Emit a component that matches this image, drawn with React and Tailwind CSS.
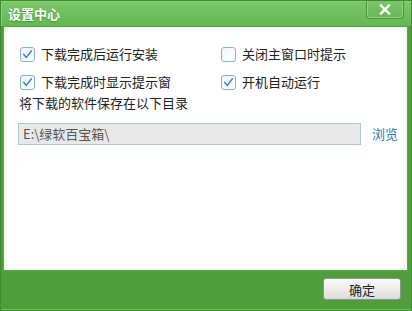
const font = { fontFamily: '"Noto Sans CJK SC", "Liberation Sans", sans-serif' }

function Check({ checked }) {
  return (
    <svg width="15" height="15" viewBox="0 0 15 15" className="shrink-0">
      <defs>
        <linearGradient id="cbg" x1="0" y1="0" x2="1" y2="1">
          <stop offset="0" stopColor="#eef4fa" />
          <stop offset="1" stopColor="#ffffff" />
        </linearGradient>
      </defs>
      <rect x="0.5" y="0.5" width="14" height="14" rx="2.5" fill="url(#cbg)" stroke="#86b2d8" />
      {checked && (
        <path d="M3.8 7.4 L6.4 10.4 L11.4 3.8" fill="none" stroke="#3485cc" strokeWidth="1.5" strokeLinecap="round" strokeLinejoin="round" />
      )}
    </svg>
  )
}

function Option({ checked, label }) {
  return (
    <label className="flex items-center gap-[6px] h-[28px] text-[13px] text-[#222]">
      <Check checked={checked} />
      <span>{label}</span>
    </label>
  )
}

export default function App() {
  return (
    <div style={font} className="w-[412px] h-[311px] flex flex-col border border-[#3e8a30] bg-[#509d3c] overflow-hidden">
      {/* title bar */}
      <div className="h-[25px] flex items-start justify-between bg-gradient-to-b from-[#7cc86a] to-[#64b654] shadow-[inset_1px_1px_0_#8fd27c]">
        <div className="pl-[7px] pt-[5px] text-[13px] font-bold leading-[15px] text-white [text-shadow:0_1px_1px_#4a8a3a]">设置中心</div>
        <button className="mr-[7px] w-[38px] h-[19px] -mt-[1px] flex items-center justify-center rounded-b-[4px] border border-[#4f9040] border-t-0 bg-gradient-to-b from-[#7cc66b] to-[#68b857] shadow-[inset_0_0_0_1px_#93d580]">
          <svg width="12" height="11" viewBox="0 0 12 11">
            <path d="M2 1.5 L10 9.5 M10 1.5 L2 9.5" stroke="#ffffff" strokeWidth="2.4" strokeLinecap="square" />
          </svg>
        </button>
      </div>

      {/* content */}
      <div className="ml-[2px] mr-[3px] h-[245px] bg-white border border-[#58a548] shadow-[inset_0_0_6px_#dcefd6] pl-[15px] pt-[13px]">
        <div className="grid grid-cols-[201px_1fr] pl-[1px]">
          <Option checked label="下载完成后运行安装" />
          <Option checked={false} label="关闭主窗口时提示" />
          <Option checked label="下载完成时显示提示窗" />
          <Option checked label="开机自动运行" />
        </div>
        <div className="h-[14px] leading-[14px] text-[13px] text-[#222]">将下载的软件保存在以下目录</div>
        <div className="mt-[13px] flex items-center">
          <div className="-ml-[1px] w-[343px] h-[22px] flex items-center px-[4px] bg-[#e9e9e9] border border-[#a7c8df] text-[13px] text-[#555]">
            E:\绿软百宝箱\
          </div>
          <span className="ml-[11px] text-[13px] text-[#2a79b9]">浏览</span>
        </div>
      </div>

      {/* footer */}
      <div className="flex-1 flex justify-end items-start pt-[7px] pr-[10px] shadow-[inset_0_-1px_0_#6fbf5c]">
        <button className="w-[78px] h-[22px] rounded-[3px] border border-[#8a9a88] bg-gradient-to-b from-[#fbfbfb] to-[#dcdcdc] text-[13px] text-[#222] leading-none">
          确定
        </button>
      </div>
    </div>
  )
}
